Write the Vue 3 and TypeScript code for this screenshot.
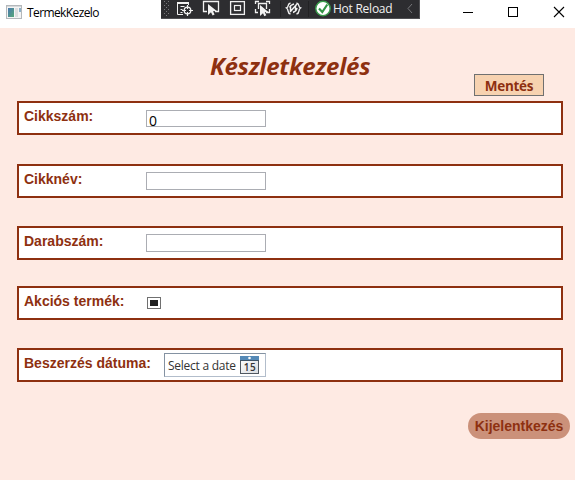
<script setup lang="ts">
import { ref } from 'vue'

const itemNumber = ref<string>('0')
const itemName = ref<string>('')
const quantity = ref<string>('')
</script>

<template>
  <div class="window">
    <header class="titlebar">
      <svg class="app-icon" width="16" height="14" viewBox="0 0 16 14">
        <defs>
          <linearGradient id="pane" x1="0" y1="0" x2="1" y2="1">
            <stop offset="0" stop-color="#4a78b0" />
            <stop offset="1" stop-color="#56a878" />
          </linearGradient>
        </defs>
        <rect x="0.5" y="0.5" width="15" height="13" fill="#f4f4f4" stroke="#b4b8bb" />
        <rect x="1" y="1" width="14" height="1" fill="#d5d8da" />
        <rect x="2" y="3" width="6" height="9" fill="url(#pane)" />
        <rect x="9" y="3" width="3" height="9" fill="#dcdedf" />
        <rect x="13" y="3" width="2" height="4" fill="#8db1c9" />
      </svg>
      <span class="app-name">TermekKezelo</span>
      <div class="debugbar">
        <svg width="258" height="19" viewBox="0 0 258 19" fill="none" stroke="#f1f1f1">
          <g fill="#77777a" stroke="none">
            <path d="M3 1h1v1h-1zM7 1h1v1h-1zM5 3h1v1h-1zM3 5h1v1h-1zM7 5h1v1h-1zM5 7h1v1h-1zM3 9h1v1h-1zM7 9h1v1h-1zM5 11h1v1h-1zM3 13h1v1h-1zM7 13h1v1h-1zM5 15h1v1h-1z" />
          </g>
          <path d="M16.500 3v11.500H22M27.500 2v3M19.500 6.500h4M19.500 9.500h2M19.500 12.500h2" />
          <path d="M16 3h12" stroke-width="2" />
          <circle cx="26.500" cy="10.500" r="3.300" stroke-width="1.300" />
          <path d="M26.500 5v4M26.500 12v4M21 10.500h4M28 10.500h4" stroke-width="1.200" />
          <path d="M46 11.500h-3.500v-10h15v10H54" stroke-width="1.300" />
          <path d="M47 4v11l3-2.800 1.600 3.300 2-1-1.600-3.200 3.800-.3z" fill="#f1f1f1" stroke="none" />
          <rect x="69.600" y="1.600" width="13.800" height="12.800" stroke-width="1.300" />
          <rect x="73.500" y="5.500" width="6" height="5" stroke-width="1.200" />
          <path d="M94.500 4V1.500H98M105 1.500h3.500V4M94.500 9v3.500H97M105 12.500h3.500V9M97.500 9V3.500h8V9" stroke-width="1.300" />
          <path d="M99 5v11l3-2.800 1.300 3 2-1-1.500-3 3.600-.2z" fill="#f1f1f1" stroke="none" />
          <path d="M119.500 1v16M147.500 1v16" stroke="#222224" />
          <path d="M129.500 3c-4 1-1 4-4 5 3 2 0 5 4 6M135.500 3c4 1 1 4 4 5-3 2 0 5-4 6" stroke-width="1.400" />
          <path d="M128.500 7.500c1-3 3-3 4.500-3.500M136 8c-.5 3-2.500 4-4 4.500M129 12l7-8M129.500 6v5M134.500 6v5" stroke-width="1.500" />
          <circle cx="162" cy="8.500" r="7.200" fill="#fff" stroke="#399b4b" stroke-width="1.400" />
          <path d="M158 8.500l3.300 3.500 5-7.500" stroke="#329445" stroke-width="2.200" />
          <path d="M251 4l-4 4.500 4 4.500" stroke="#77777a" />
        </svg>
        <span class="hot-reload">Hot Reload</span>
      </div>
      <svg class="controls" width="103" height="12" viewBox="0 0 103 12" fill="none" stroke="#000" shape-rendering="crispEdges">
        <path d="M0 6.500h10" />
        <rect x="45.500" y="1.500" width="9" height="9" />
        <path d="M91 1l10 10M101 1L91 11" shape-rendering="auto" stroke-width="1.100" />
      </svg>
    </header>

    <main class="content">
      <div class="heading">
        <h1>Készletkezelés</h1>
        <button class="save">Mentés</button>
      </div>
      <form class="form" @submit.prevent>
        <section class="row number">
          <label>Cikkszám:</label>
          <input v-model="itemNumber" type="text" />
        </section>
        <section class="row name">
          <label>Cikknév:</label>
          <input v-model="itemName" type="text" />
        </section>
        <section class="row quantity">
          <label>Darabszám:</label>
          <input v-model="quantity" type="text" />
        </section>
        <section class="row sale">
          <label>Akciós termék:</label>
          <span class="check" role="checkbox" aria-checked="mixed"></span>
        </section>
        <section class="row date">
          <label>Beszerzés dátuma:</label>
          <div class="picker">
            <span class="placeholder">Select a date</span>
            <svg width="19" height="18" viewBox="0 0 19 18">
              <defs>
                <linearGradient id="page" x1="0" y1="0" x2="1" y2="1">
                  <stop offset="0" stop-color="#fff" />
                  <stop offset="1" stop-color="#d9dce0" />
                </linearGradient>
              </defs>
              <rect x="0.500" y="0.500" width="18" height="17" fill="url(#page)" stroke="#505861" />
              <rect x="0" y="0" width="19" height="4" fill="#5489b7" />
              <rect x="0" y="4" width="19" height="1" fill="#3f5366" />
              <circle cx="9.500" cy="2" r="1.300" fill="#fff" />
              <text x="9.900" y="15" text-anchor="middle">15</text>
            </svg>
          </div>
        </section>
      </form>
      <button class="logout">Kijelentkezés</button>
    </main>
  </div>
</template>

<style>
body {
  margin: 0;
  overflow: hidden;
}
</style>

<style scoped>
* {
  box-sizing: border-box;
}
.window {
  width: 575px;
  height: 480px;
  background: #feeae3;
  font-family: "Open Sans", "Noto Sans", sans-serif;
}
.titlebar {
  display: flex;
  height: 28px;
  background: #fff;
}
.app-icon {
  margin: 5px 0 0 6px;
}
.app-name {
  width: 134px;
  margin-left: 5px;
  font-size: 12px;
  line-height: 26px;
  color: #000;
  letter-spacing: -0.6px;
}
.debugbar {
  display: grid;
  width: 259px;
  height: 19px;
  background: #2d2d30;
  border-bottom: 1px solid #505053;
  border-right: 1px solid #505053;
}
.debugbar > * {
  grid-area: 1 / 1;
}
.hot-reload {
  padding-left: 172px;
  font-size: 12px;
  line-height: 17px;
  letter-spacing: -0.25px;
  color: #f1f1f1;
  white-space: nowrap;
}
.controls {
  margin: 6px 0 0 43px;
}
.content {
  display: flex;
  flex-direction: column;
  height: 452px;
}
.heading {
  display: flex;
  height: 73px;
  padding-left: 210px;
}
h1 {
  width: 264px;
  margin: 20px 0 0;
  font-size: 24px;
  line-height: 36px;
  font-style: italic;
  font-weight: 700;
  letter-spacing: -0.25px;
  color: #8e3010;
}
button {
  padding: 0;
  color: #8e3010;
  font-weight: 700;
  white-space: nowrap;
}
.save {
  width: 70px;
  height: 22px;
  margin-top: 46px;
  background: #f7d2b0;
  border: 1px solid #707070;
  font-family: "Open Sans", "Noto Sans", sans-serif;
  font-size: 13.500px;
  line-height: 22px;
  letter-spacing: -0.3px;
}
.form {
  width: 546px;
  margin-left: 17px;
}
.row {
  display: flex;
  height: 34px;
  background: #fff;
  border: 2px solid #8e3010;
}
.name {
  margin-top: 29px;
}
.quantity,
.date {
  margin-top: 28px;
}
.sale {
  margin-top: 26px;
}
label {
  width: 122px;
  margin-left: 5px;
  font-family: "Liberation Sans", Arial, sans-serif;
  font-size: 14px;
  line-height: 26px;
  font-weight: 700;
  color: #8e3010;
  white-space: nowrap;
}
input {
  width: 120px;
  height: 18px;
  margin-top: 6px;
  padding: 2px 0 0 2px;
  border: 1px solid #abadb3;
  border-radius: 0;
  background: #fff;
  font-family: "Open Sans", "Noto Sans", sans-serif;
  font-size: 14px;
  line-height: 17px;
  color: #000;
  outline: none;
}
.number input {
  height: 17px;
  margin-top: 7px;
  padding-top: 4px;
}
.check {
  display: block;
  width: 14px;
  height: 12px;
  margin: 9px 0 0 1px;
  padding: 2px;
  border: 1px solid #707070;
}
.check::before {
  content: "";
  display: block;
  height: 6px;
  background: #212121;
}
.date label {
  width: 140px;
}
.picker {
  display: flex;
  width: 102px;
  height: 24px;
  margin-top: 3px;
  padding: 2px 0 0 3px;
  border: 1px solid #8492a2;
  border-right: 1px solid #b2bdcb;
  border-bottom-color: #b2bdcb;
}
.placeholder {
  width: 72px;
  font-size: 12px;
  line-height: 20px;
  letter-spacing: -0.25px;
  color: #333;
  white-space: nowrap;
}
.picker text {
  font-family: "Open Sans", sans-serif;
  font-size: 10px;
  font-weight: 600;
  letter-spacing: 0.5px;
  fill: #333;
}
.logout {
  width: 102px;
  height: 26px;
  margin: 31px 0 0 468px;
  border: 0;
  border-radius: 13px;
  background: #cb917a;
  font-family: "Liberation Sans", Arial, sans-serif;
  font-size: 14px;
  line-height: 26px;
}
</style>
